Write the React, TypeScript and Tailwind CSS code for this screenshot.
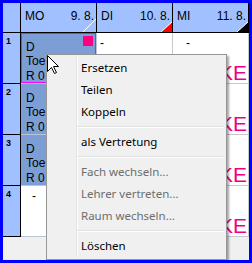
const days = [
  { name: "MO", date: "9. 8.", corner: "line" },
  { name: "DI", date: "10. 8.", corner: "red" },
  { name: "MI", date: "11. 8.", corner: "black" },
];

const menu: ({ label: string; disabled?: boolean } | "sep")[] = [
  { label: "Ersetzen" },
  { label: "Teilen" },
  { label: "Koppeln" },
  "sep",
  { label: "als Vertretung" },
  "sep",
  { label: "Fach wechseln...", disabled: true },
  { label: "Lehrer vertreten...", disabled: true },
  { label: "Raum wechseln...", disabled: true },
  "sep",
  { label: "Löschen" },
];

function Corner({ kind }: { kind: string }) {
  if (kind === "line") {
    return (
      <svg className="absolute right-0 bottom-0" width="13" height="13" viewBox="0 0 13 13">
        <line x1="0" y1="13" x2="13" y2="0" stroke="#fff" strokeWidth="1" />
      </svg>
    );
  }
  const fill = kind === "red" ? "#ff0000" : "#000000";
  return (
    <svg className="absolute right-0 bottom-0" width="11" height="10" viewBox="0 0 11 10">
      <polygon points="0,10 11,10 11,0" fill={fill} />
      <line x1="0" y1="10" x2="11" y2="0" stroke="#fff" strokeWidth="1" />
    </svg>
  );
}

function Lesson({ selected }: { selected?: boolean }) {
  return (
    <div
      className={`relative h-full pl-[5px] pt-[7px] text-[12px] text-black bg-[#7b9fd4] ${
        selected ? "shadow-[inset_0_0_0_1px_#ff00ff]" : ""
      }`}
    >
      {selected && <div className="absolute right-[3px] top-[3px] h-[10px] w-[10px] bg-[#ff0080]" />}
      <div className="leading-[14px]">D</div>
      <div className="leading-[14px]">Toe</div>
      <div className="mt-[1px] leading-[14px]">R 0</div>
    </div>
  );
}

export default function App() {
  return (
    <div className="relative h-[263px] w-[252px] overflow-hidden border-[3px] border-[#0000ff] bg-[#f0f0f0] font-['Liberation_Sans',Arial,sans-serif]">
      <div className="flex h-[30px] border-b border-black bg-[#a0c0ff] text-[12px] text-black">
        <div className="w-[18px] border-r border-black" />
        {days.map((d) => (
          <div key={d.name} className="relative flex w-[76px] justify-between border-r border-black pl-[4px] pr-[2px] pt-[4px]">
            <span>{d.name}</span>
            <span>{d.date}</span>
            <Corner kind={d.corner} />
          </div>
        ))}
      </div>

      {[1, 2, 3, 4].map((n) => (
        <div key={n} className="flex h-[51px]">
          <div className="w-[18px] border-r border-b border-black bg-[#a0c0ff] pl-[3px] pt-[3px] text-[9px] font-bold leading-[10px]">
            {n}
          </div>
          <div className="w-[76px] border-r border-b border-[#b8c4d8] bg-white">
            {n < 4 ? (
              <Lesson selected={n === 1} />
            ) : (
              <div className="pl-[11px] pt-[3px] text-[12px] leading-[14px]">-</div>
            )}
          </div>
          <div className="w-[76px] border-r border-b border-[#c8c8c8] bg-white pl-[3px] pt-[3px] text-[12px] leading-[14px]">
            {n === 1 ? "-" : ""}
          </div>
          <div className="relative flex w-[76px] flex-col border-r border-b border-[#c8c8c8] bg-white text-[12px] leading-[14px]">
            <div className="h-[30px] pl-[13px] pt-[3px]">{n === 1 ? "-" : ""}</div>
            <div className="flex h-[20px] justify-end pr-[1px] text-[21px] leading-[20px] text-[#ee0088]">KE</div>
          </div>
        </div>
      ))}

      <div className="absolute left-[43px] top-[51px] h-[206px] w-[181px] border border-[#979797] bg-[#f0f0f0] p-[2px] shadow-[2px_2px_2px_rgba(0,0,0,0.35)] font-['Noto_Sans',sans-serif] text-[11.5px]">
        <div className="absolute bottom-[2px] left-[29px] top-[2px] w-px bg-[#e2e3e3]" />
        <div className="absolute bottom-[2px] left-[30px] top-[2px] w-px bg-white" />
        {menu.map((m, i) =>
          m === "sep" ? (
            <div key={i} className="relative flex h-[8px] flex-col justify-center pl-[28px]">
              <div className="h-px bg-[#e0e0e0]" />
              <div className="h-px bg-white" />
            </div>
          ) : (
            <div
              key={i}
              className={`relative flex h-[22px] items-center pl-[32px] ${m.disabled ? "text-[#6d6d6d]" : "text-black"}`}
            >
              {m.label}
            </div>
          )
        )}
      </div>

      <svg className="absolute left-[44px] top-[52px]" width="13" height="20" viewBox="0 0 13 20">
        <path d="M0.5 0.5 L0.5 16.5 L4.5 12.5 L7.5 18.5 L9.5 17.5 L6.5 11.5 L11.5 11.5 Z" fill="#fff" stroke="#000" strokeWidth="1" />
      </svg>
    </div>
  );
}
